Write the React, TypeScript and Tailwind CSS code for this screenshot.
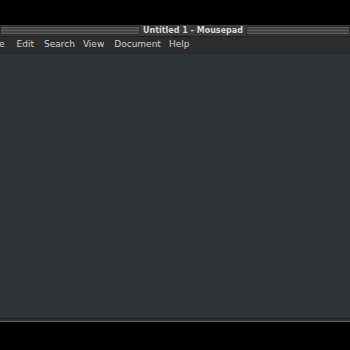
const Stripes = ({ className }: { className: string }) => (
  <div className={`h-[9px] border border-[#2a2a2a] bg-[repeating-linear-gradient(to_bottom,#5c5c5c_0px,#5c5c5c_1px,#444444_1px,#444444_3px)] ${className}`} />
);

export default function App() {
  return (
    <div className="w-[350px] h-[350px] bg-black flex flex-col font-['DejaVu_Sans',sans-serif] overflow-hidden">
      <div className="h-[25px]" />
      {/* title bar */}
      <div className="h-[12px] bg-[#3a3a3a] flex items-center gap-[3px] border-b border-[#1e1e1e]">
        <Stripes className="w-[140px] shrink-0" />
        <span className="text-[8px] font-bold leading-none text-[#d8d8d8] whitespace-nowrap">Untitled 1 - Mousepad</span>
        <Stripes className="flex-1" />
      </div>
      {/* menu bar */}
      <div className="h-[16px] bg-[#2d2d2d] flex items-center text-[9px] text-[#d0d0d0] whitespace-nowrap">
        <span className="ml-[-1px] mr-[12px]">e</span>
        <span className="mr-[10px]">Edit</span>
        <span className="mr-[8px]">Search</span>
        <span className="mr-[10px]">View</span>
        <span className="mr-[8px]">Document</span>
        <span>Help</span>
      </div>
      <div className="h-px bg-[#24292b]" />
      {/* editor */}
      <div className="flex-1 bg-[#2e3436]" />
      <div className="h-px bg-[#1f2324]" />
      <div className="h-px bg-[#2e3436]" />
      <div className="h-px bg-[#3a3a3a]" />
      <div className="h-px bg-[#555555]" />
      <div className="h-[28px]" />
    </div>
  );
}
